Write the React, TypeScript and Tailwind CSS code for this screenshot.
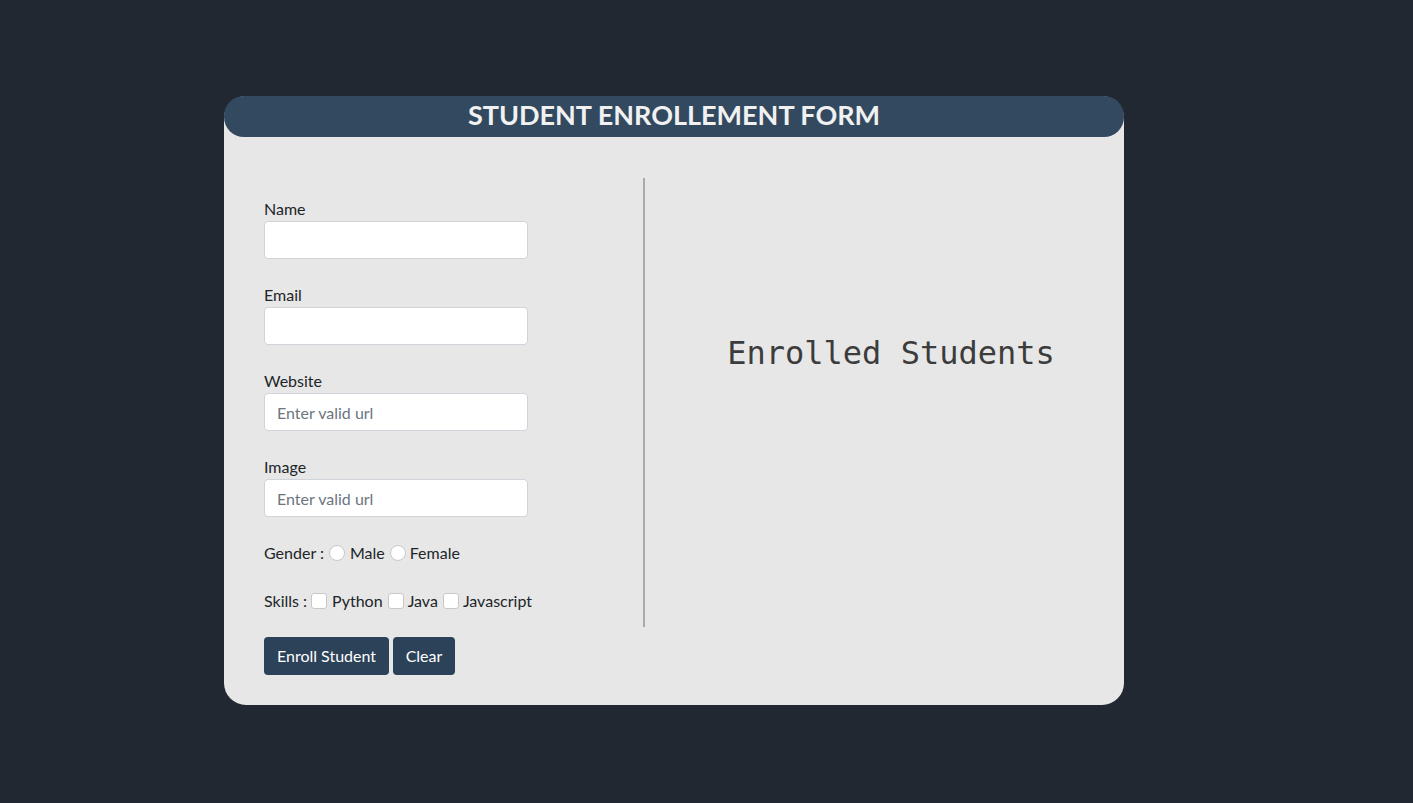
import React from "react";

const font = { fontFamily: '"Lato", "Noto Sans", sans-serif' };

function Field({ label, placeholder }: { label: string; placeholder?: string }) {
  return (
    <div className="flex flex-col mb-[24px]">
      <label className="text-[16px] leading-[24px] text-[#212529]">{label}</label>
      <input
        type="text"
        placeholder={placeholder}
        className="w-[264px] h-[38px] bg-white border border-[#ced4da] rounded-[4px] px-[12px] text-[16px] text-[#212529] placeholder:text-[#6c757d] outline-none"
      />
    </div>
  );
}

export default function App() {
  return (
    <div className="min-h-screen w-full bg-[#222831] flex justify-start pl-[224px] pt-[96px]" style={font}>
      <div className="w-[900px] h-[609px] bg-[#e7e7e7] rounded-[22px] flex flex-col">
        <h1 className="h-[41px] bg-[#324960] rounded-[20px] text-center text-[#f1f1f1] font-bold text-[27px] leading-[38px]">
          STUDENT ENROLLEMENT FORM
        </h1>
        <div className="flex pt-[41px] px-[40px]">
          <div className="w-[381px] border-r-2 border-[#aaaaaa] pt-[19px] pb-[14px]">
            <Field label="Name" />
            <Field label="Email" />
            <Field label="Website" placeholder="Enter valid url" />
            <Field label="Image" placeholder="Enter valid url" />
            <div className="flex items-center h-[24px] text-[16px] text-[#212529] mb-[24px]">
              <span>Gender :</span>
              <input type="radio" name="g" className="appearance-none w-[16px] h-[16px] rounded-full bg-white border border-[#c8c8c8] ml-[5px] mr-[5px]" />
              <span>Male</span>
              <input type="radio" name="g" className="appearance-none w-[16px] h-[16px] rounded-full bg-white border border-[#c8c8c8] ml-[5px] mr-[4px]" />
              <span>Female</span>
            </div>
            <div className="flex items-center h-[24px] text-[16px] text-[#212529]">
              <span>Skills :</span>
              <input type="checkbox" className="appearance-none w-[16px] h-[16px] rounded-[3px] bg-white border border-[#c8c8c8] ml-[4px] mr-[5px]" />
              <span>Python</span>
              <input type="checkbox" className="appearance-none w-[16px] h-[16px] rounded-[3px] bg-white border border-[#c8c8c8] ml-[5px] mr-[4px]" />
              <span>Java</span>
              <input type="checkbox" className="appearance-none w-[16px] h-[16px] rounded-[3px] bg-white border border-[#c8c8c8] ml-[5px] mr-[4px]" />
              <span>Javascript</span>
            </div>
          </div>
          <div className="flex-1 flex justify-center pl-[53px] pt-[155px]">
            <h2
              className="text-[32px] leading-[40px] text-[#3c3c3c] font-light"
              style={{ fontFamily: '"DejaVu Sans Mono", "Liberation Mono", monospace' }}
            >
              Enrolled Students
            </h2>
          </div>
        </div>
        <div className="flex gap-[4px] px-[40px] mt-[10px]">
          <button className="h-[38px] w-[125px] bg-[#2c4258] text-white text-[16px] rounded-[4px]">
            Enroll Student
          </button>
          <button className="h-[38px] w-[62px] bg-[#2c4258] text-white text-[16px] rounded-[4px]">
            Clear
          </button>
        </div>
      </div>
    </div>
  );
}
